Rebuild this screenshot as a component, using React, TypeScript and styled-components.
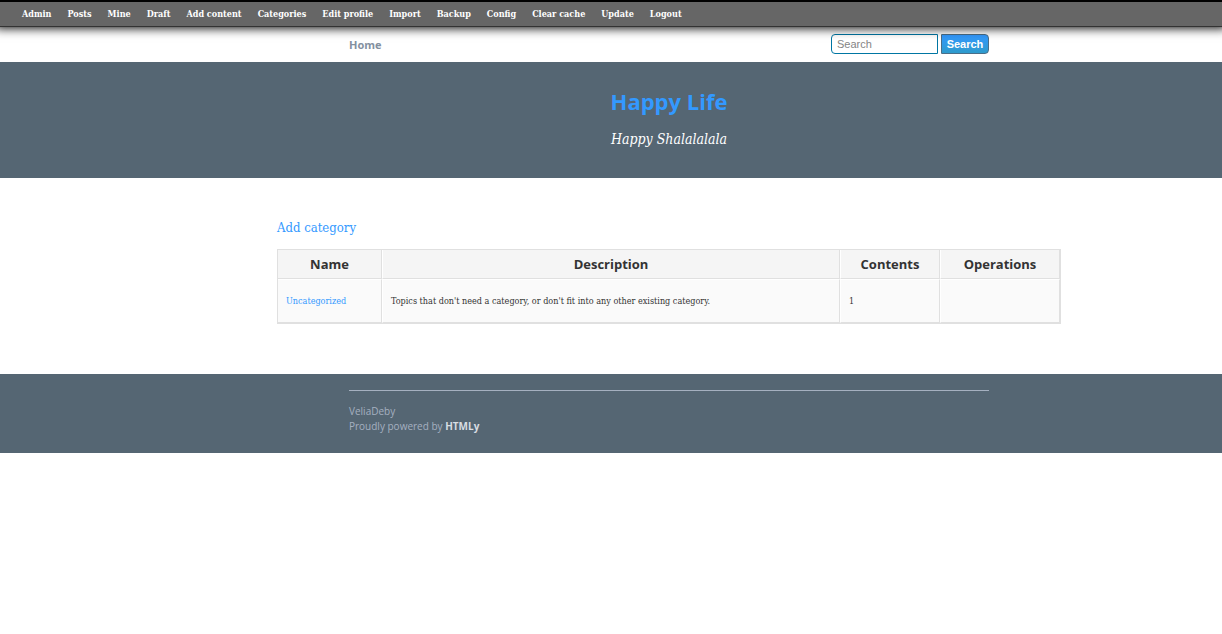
import React from "react";
import styled, { createGlobalStyle } from "styled-components";

const serif = `Georgia, "DejaVu Serif Condensed", "DejaVu Serif", serif`;
const sans = `"Open Sans", sans-serif`;

const GlobalStyle = createGlobalStyle`
  *, *::before, *::after { box-sizing: border-box; }
  body { margin: 0; background: #fff; color: #333; font-family: ${serif}; }
  a { color: #3399ff; text-decoration: none; }
`;

const Toolbar = styled.nav`
  position: relative;
  background: #666;
  border-top: 2px solid #000;
  border-bottom: 1px solid #333;
  box-shadow: 0 -4px 10px 5px #000;
`;

const ToolbarList = styled.ul`
  display: flex;
  gap: 16px;
  margin: 0;
  padding: 0 22px;
  list-style: none;
`;

const ToolbarLink = styled.a`
  display: block;
  color: #fff;
  font-size: 9px;
  font-weight: bold;
  line-height: 24px;
  white-space: nowrap;
`;

const Band = styled.div<{ $filled?: boolean }>`
  padding-left: 116px;
  background: ${(p) => (p.$filled ? "#556673" : "transparent")};
`;

const Inner = styled.div<{ $wide?: boolean }>`
  max-width: ${(p) => (p.$wide ? 784 : 640)}px;
  margin: 0 auto;
`;

const MenuRow = styled(Inner)`
  display: flex;
  align-items: flex-start;
  justify-content: space-between;
  padding: 7px 0 6px;
`;

const HomeLink = styled.a`
  && { color: #8390a0; }
  font: bold 11px/22px ${sans};
`;

const SearchForm = styled.form`
  display: flex;
  gap: 3px;
`;

const SearchInput = styled.input`
  width: 107px;
  height: 20px;
  padding: 0 5px;
  border: 1px solid #0076a3;
  border-radius: 4px 0 0 4px;
  background: #fff;
  font: 11px "Liberation Sans", Arial, sans-serif;
  &::placeholder { color: #858585; }
`;

const SearchButton = styled.button`
  width: 48px;
  height: 20px;
  padding: 0;
  border: 1px solid #4a6e88;
  border-radius: 0 4px 4px 0;
  background: linear-gradient(#3399ff, #2e9bcc);
  color: #fff;
  font: bold 11px "Liberation Sans", Arial, sans-serif;
`;

const Branding = styled.header`
  padding: 23px 0 29px;
  text-align: center;
`;

const Title = styled.h1`
  margin: 0 0 12px;
  font: bold 22px/32px ${sans};
`;

const Tagline = styled.p`
  margin: 0;
  color: #fff;
  font-size: 14px;
  font-style: italic;
  line-height: 20px;
`;

const Main = styled.main`
  padding: 40px 0 50px;
`;

const AddLink = styled.a`
  display: block;
  width: fit-content;
  margin-bottom: 11px;
  font-size: 13px;
  line-height: 20px;
`;

const Table = styled.table`
  width: 100%;
  table-layout: fixed;
  border: 1px solid #e0e0e0;
  border-collapse: separate;
  border-spacing: 0;
`;

const HeadCell = styled.th`
  padding: 4px 8px;
  border-right: 1px solid #e0e0e0;
  border-bottom: 1px solid #e0e0e0;
  background: #f5f5f5;
  font: bold 13px/20px ${sans};
  & + & { border-left: 1px solid #fff; }
`;

const Cell = styled.td`
  height: 44px;
  padding: 0 8px;
  border-top: 1px solid #fff;
  border-right: 1px solid #e0e0e0;
  border-bottom: 1px solid #e0e0e0;
  background: #fafafa;
  font-size: 9px;
  line-height: 20px;
  & + & { border-left: 1px solid #fff; }
`;

const Footer = styled.footer`
  padding: 16px 0 19px;
`;

const Credits = styled.div`
  padding-top: 13px;
  border-top: 1px solid #a5b0c0;
  color: #a5b0c0;
  font: 10px/15px ${sans};
`;

const PoweredLink = styled.a`
  && { color: #d8dde2; }
  font-weight: bold;
`;

const links = [
  "Admin", "Posts", "Mine", "Draft", "Add content", "Categories", "Edit profile",
  "Import", "Backup", "Config", "Clear cache", "Update", "Logout",
];

export default function App() {
  return (
    <>
      <GlobalStyle />
      <Toolbar>
        <ToolbarList>
          {links.map((label) => (
            <li key={label}><ToolbarLink href="#">{label}</ToolbarLink></li>
          ))}
        </ToolbarList>
      </Toolbar>
      <Band>
        <MenuRow>
          <HomeLink href="#">Home</HomeLink>
          <SearchForm role="search">
            <SearchInput type="text" placeholder="Search" aria-label="Search" />
            <SearchButton type="button">Search</SearchButton>
          </SearchForm>
        </MenuRow>
      </Band>
      <Band $filled>
        <Branding>
          <Title><a href="#">Happy Life</a></Title>
          <Tagline>Happy Shalalalala</Tagline>
        </Branding>
      </Band>
      <Band>
        <Main>
          <Inner $wide>
            <AddLink href="#">Add category</AddLink>
            <Table>
              <colgroup>
                <col style={{ width: 104 }} />
                <col />
                <col style={{ width: 100 }} />
                <col style={{ width: 120 }} />
              </colgroup>
              <thead>
                <tr>
                  <HeadCell>Name</HeadCell>
                  <HeadCell>Description</HeadCell>
                  <HeadCell>Contents</HeadCell>
                  <HeadCell>Operations</HeadCell>
                </tr>
              </thead>
              <tbody>
                <tr>
                  <Cell><a href="#">Uncategorized</a></Cell>
                  <Cell>Topics that don't need a category, or don't fit into any other existing category.</Cell>
                  <Cell>1</Cell>
                  <Cell />
                </tr>
              </tbody>
            </Table>
          </Inner>
        </Main>
      </Band>
      <Band $filled>
        <Footer>
          <Inner>
            <Credits>
              <div>VeliaDeby</div>
              <div>Proudly powered by <PoweredLink href="#">HTMLy</PoweredLink></div>
            </Credits>
          </Inner>
        </Footer>
      </Band>
    </>
  );
}
